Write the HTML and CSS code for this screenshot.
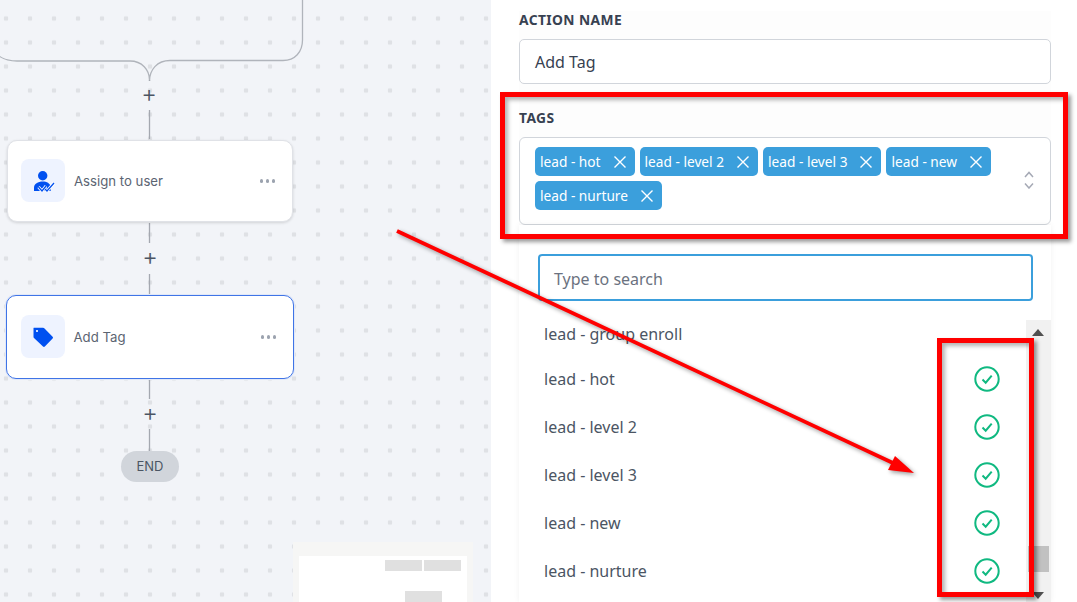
FILE: index.html
```html
<!DOCTYPE html>
<html lang="en">
<head>
<meta charset="utf-8">
<title>Add Tag</title>
<link rel="stylesheet" href="styles.css">
</head>
<body>
<div class="page">
  <section class="canvas">
    <svg class="wires" width="491" height="602" viewBox="0 0 491 602" fill="none">
      <path d="M-6 50C-2 57 4 61 17 61H130C142 61 149.5 70 149.5 80V81C149.5 70 157 60.500 170 60.500H283C295 60.500 302.500 52 302.500 40V0" stroke="#b0b4bb" stroke-width="1.300"/>
      <path d="M149.500 80V81M149.500 110V139M149.500 223V243M149.500 274V295M149.500 379V399M149.500 429V451" stroke="#a4a8b0" stroke-width="1.300"/>
    </svg>
    <span class="plus plus-a">+</span>
    <span class="plus plus-b">+</span>
    <span class="plus plus-c">+</span>

    <article class="node node-user">
      <span class="node-icon">
        <svg width="24" height="24" viewBox="0 0 24 24">
          <circle cx="11.700" cy="7.700" r="4.700" fill="#0050f0"/>
          <path d="M3 23v-3.500C3 16 7 13.500 11.700 13.500c4 0 7.500 1.800 8 5.500v4z" fill="#0050f0"/>
          <path d="M7.500 19l3.500 4 4-5M14 21l2 2 7-8" fill="none" stroke="#fff" stroke-width="3"/>
          <path d="M7.500 19l3.500 4 4-5M14 21l2 2 7-8" fill="none" stroke="#0050f0" stroke-width="1.300"/>
        </svg>
      </span>
      <span class="node-name">Assign to user</span>
      <span class="node-more"><i></i><i></i><i></i></span>
    </article>

    <article class="node node-tag">
      <span class="node-icon">
        <svg width="24" height="24" viewBox="0 0 22 22">
          <path d="M2.500 2.500h8.500a2 2 0 0 1 1.400.6l7.400 7.600a1.200 1.200 0 0 1 0 1.700l-7.100 7.300a1.200 1.200 0 0 1-1.700 0L3 12.200a2 2 0 0 1-.7-1.500V3.500a1 1 0 0 1 .2-1z" fill="#0050f0"/>
          <circle cx="5.500" cy="5.500" r="1" fill="#fff"/>
        </svg>
      </span>
      <span class="node-name">Add Tag</span>
      <span class="node-more"><i></i><i></i><i></i></span>
    </article>

    <span class="end-pill">END</span>

    <div class="minimap">
      <div class="minimap-sheet">
        <div class="minimap-row minimap-top"><i></i><i></i></div>
        <div class="minimap-row minimap-low"><i></i></div>
      </div>
    </div>
  </section>

  <section class="panel">
    <div class="form">
      <label class="field-label first">ACTION NAME</label>
      <div class="name-input">Add Tag</div>
      <label class="field-label second">TAGS</label>
      <div class="tag-box">
        <div class="chips">
          <span class="chip">lead - hot<svg class="chip-x" width="12" height="12" viewBox="0 0 12 12"><path d="M.5.500l11 11M11.500.500l-11 11"/></svg></span>
          <span class="chip">lead - level 2<svg class="chip-x" width="12" height="12" viewBox="0 0 12 12"><path d="M.5.500l11 11M11.500.500l-11 11"/></svg></span>
          <span class="chip">lead - level 3<svg class="chip-x" width="12" height="12" viewBox="0 0 12 12"><path d="M.5.500l11 11M11.500.500l-11 11"/></svg></span>
          <span class="chip">lead - new<svg class="chip-x" width="12" height="12" viewBox="0 0 12 12"><path d="M.5.500l11 11M11.500.500l-11 11"/></svg></span>
          <span class="chip">lead - nurture<svg class="chip-x" width="12" height="12" viewBox="0 0 12 12"><path d="M.5.500l11 11M11.500.500l-11 11"/></svg></span>
        </div>
        <svg class="chevrons" width="10" height="18" viewBox="0 0 10 18" fill="none"><path d="M1 6l4-4.500 4 4.500M1 12.500l4 4.500 4-4.500"/></svg>
      </div>
      <div class="dropdown">
        <div class="search-wrap"><div class="search">Type to search</div></div>
        <div class="list-area">
          <ul class="options">
            <li class="option option-first">lead - group enroll</li>
            <li class="option">lead - hot<svg class="check" width="26" height="26" viewBox="0 0 26 26" fill="none"><circle cx="13" cy="13" r="11.700"/><path d="M8.500 13.500l3.200 3.200 6-7"/></svg></li>
            <li class="option">lead - level 2<svg class="check" width="26" height="26" viewBox="0 0 26 26" fill="none"><circle cx="13" cy="13" r="11.700"/><path d="M8.500 13.500l3.200 3.200 6-7"/></svg></li>
            <li class="option">lead - level 3<svg class="check" width="26" height="26" viewBox="0 0 26 26" fill="none"><circle cx="13" cy="13" r="11.700"/><path d="M8.500 13.500l3.200 3.200 6-7"/></svg></li>
            <li class="option">lead - new<svg class="check" width="26" height="26" viewBox="0 0 26 26" fill="none"><circle cx="13" cy="13" r="11.700"/><path d="M8.500 13.500l3.200 3.200 6-7"/></svg></li>
            <li class="option">lead - nurture<svg class="check" width="26" height="26" viewBox="0 0 26 26" fill="none"><circle cx="13" cy="13" r="11.700"/><path d="M8.500 13.500l3.200 3.200 6-7"/></svg></li>
          </ul>
          <div class="scrollbar">
            <span class="sb-arrow sb-up"></span>
            <span class="sb-thumb"></span>
            <span class="sb-arrow sb-down"></span>
          </div>
        </div>
      </div>
    </div>
  </section>

  <div class="mark mark-tags"></div>
  <div class="mark mark-checks"></div>
  <svg class="arrow" width="1077" height="602" viewBox="0 0 1077 602">
    <path d="M397 231L893 463" stroke="#ff0000" stroke-width="3.800" fill="none"/>
    <path d="M914 473L895 456L888 470z" fill="#ff0000"/>
  </svg>
</div>
</body>
</html>
```
FILE: styles.css
```css
* { box-sizing: border-box; }
html, body { margin: 0; padding: 0; }
body { width: 1077px; height: 602px; overflow: hidden; background: #fff; font-family: "Noto Sans", "Open Sans", sans-serif; }
.page { position: relative; display: flex; width: 1077px; height: 602px; overflow: hidden; }

/* workflow canvas */
.canvas {
  position: relative;
  flex: 0 0 491px;
  height: 602px;
  background-color: #f2f4f8;
  background-image: radial-gradient(circle, #dfe1e5 2.200px, transparent 2.600px);
  background-size: 24px 24px;
  background-position: -6px 6.500px;
}
.wires { position: absolute; left: 0; top: 0; }
.plus {
  position: absolute;
  width: 20px;
  height: 20px;
  font: 300 24px/20px "Inter", sans-serif;
  color: #4b5563;
  text-align: center;
}
.plus-a { left: 139px; top: 84px; }
.plus-b { left: 140px; top: 247px; }
.plus-c { left: 140px; top: 403px; }
.node {
  position: absolute;
  display: flex;
  align-items: center;
  background: #fff;
  border-radius: 10px;
  font: 400 13.200px/18px "Inter", sans-serif;
  color: #5b6472;
}
.node-user { left: 7px; top: 139.500px; width: 286px; height: 82.500px; padding-left: 13px; border: 1px solid #e0e2e7; box-shadow: 0 1px 3px rgba(0,0,0,.14); }
.node-tag { left: 6px; top: 295px; width: 288px; height: 84px; padding-left: 13.500px; border: 1.500px solid #3f74e6; box-shadow: 0 0 0 1px #e1e8f8; }
.node-icon { flex: 0 0 44px; height: 43px; margin-top: -1px; display: flex; align-items: center; justify-content: center; border-radius: 8px; background: #eef3ff; }
.node-name { margin-left: 9px; flex: 1; }
.node-more { display: flex; gap: 2.500px; margin-right: 17px; }
.node-more i { width: 3.500px; height: 3.500px; border-radius: 50%; background: #9ca3af; }
.end-pill {
  position: absolute;
  left: 121px;
  top: 451px;
  width: 58px;
  height: 31px;
  border-radius: 16px;
  background: #d1d5db;
  font: 400 13px/31px "Inter", sans-serif;
  color: #4b5563;
  text-align: center;
}
.minimap { position: absolute; left: 293px; top: 542px; width: 180px; height: 60px; padding: 14px 6px 0; background: #f6f6f5; }
.minimap-sheet { height: 46px; background: #fff; padding-top: 4px; }
.minimap-row { display: flex; gap: 2px; }
.minimap-row i { width: 37px; height: 11px; background: #e0e0e0; }
.minimap-top { padding-left: 86px; }
.minimap-low { padding-left: 106px; margin-top: 20px; }

/* settings panel */
.panel { flex: 1; height: 602px; background: #fff; padding-left: 28px; padding-right: 26px; }
.form { width: 532px; height: 602px; background: #fdfdfd; }
.field-label { display: block; height: 18px; font: 700 13.800px/18px "Noto Sans", sans-serif; letter-spacing: .4px; color: #374151; }
.first { margin-top: 11px; }
.second { margin-top: 25px; }
.name-input {
  height: 45px;
  margin-top: 10px;
  padding: 1px 0 0 15px;
  border: 1px solid #d1d5db;
  border-radius: 5px;
  background: #fff;
  font-size: 16px;
  line-height: 43px;
  color: #374151;
}
.tag-box {
  display: flex;
  align-items: flex-start;
  height: 88px;
  margin-top: 10px;
  padding: 9px 15px 0 15px;
  border: 1px solid #d1d5db;
  border-radius: 6px;
  background: #fff;
}
.chips { display: flex; flex-wrap: wrap; gap: 5px; width: 470px; }
.chip {
  display: flex;
  align-items: center;
  justify-content: space-between;
  gap: 13px;
  height: 29px;
  padding: 0 9px 0 5px;
  border-radius: 5px;
  background: #3b9fdc;
  color: #fff;
  font-size: 13.700px;
  font-weight: 400;
}
.chip-x { stroke: #fff; stroke-width: 1.400; }
.chevrons { margin: 24px 0 0 19px; stroke: #a5a9b5; stroke-width: 1.500; }
.dropdown { height: 377px; background: #fff; box-shadow: 0 0 6px rgba(0,0,0,.06); }
.search-wrap { padding: 29px 18px 0 19px; }
.search {
  height: 47px;
  padding: 2px 0 0 14px;
  border: 2px solid #3b9fdc;
  border-radius: 4px;
  background: #fff;
  font-size: 16px;
  line-height: 43px;
  color: #6b7280;
}
.list-area { display: flex; height: 301px; margin-top: 19px; }
.options { flex: 1; margin: 0; padding: 0; list-style: none; }
.option {
  display: flex;
  align-items: center;
  justify-content: space-between;
  height: 48px;
  padding: 0 26px 0 25px;
  font-size: 16px;
  color: #4b5563;
}
.option-first { height: 35px; padding-bottom: 8px; }
.check { stroke: #10b981; stroke-width: 2; }
.scrollbar { position: relative; flex: 0 0 25px; height: 282px; background: #f1f1f1; }
.sb-arrow { position: absolute; left: 6px; width: 0; height: 0; border-left: 6px solid transparent; border-right: 6px solid transparent; }
.sb-up { top: 9px; border-bottom: 7px solid #505050; }
.sb-down { bottom: 3px; border-top: 7px solid #505050; }
.sb-thumb { position: absolute; left: 2px; top: 226px; width: 21px; height: 26px; background: #c1c1c1; }

/* annotations drawn over the screenshot */
.mark { position: absolute; border: 5px solid #ff0000; box-shadow: 3px 3px 4px rgba(0,0,0,.4), inset 3px 3px 4px rgba(0,0,0,.3); }
.mark-tags { left: 500px; top: 92px; width: 568px; height: 147px; }
.mark-checks { left: 937px; top: 338px; width: 97px; height: 259px; }
.arrow { position: absolute; left: 0; top: 0; filter: drop-shadow(2px 2px 2px rgba(0,0,0,.4)); }
```
